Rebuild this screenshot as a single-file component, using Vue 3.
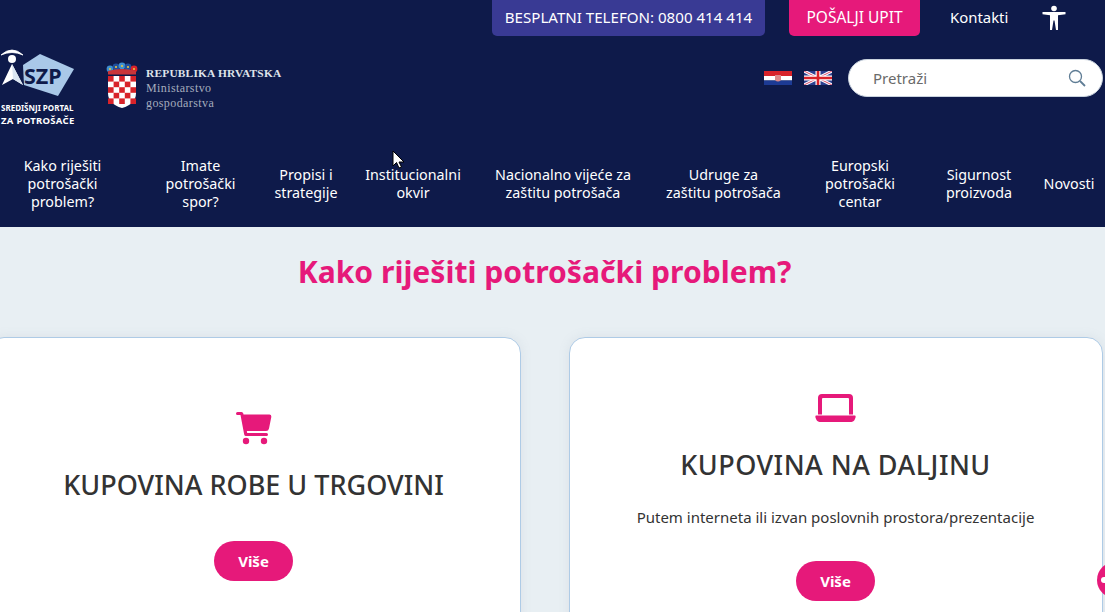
<script setup>
const nav = [
  { w: 125, lines: ['Kako riješiti', 'potrošački', 'problem?'] },
  { w: 151, lines: ['Imate', 'potrošački', 'spor?'] },
  { w: 64, pad: 4, lines: ['Propisi i', 'strategije'] },
  { w: 146, lines: ['Institucionalni', 'okvir'] },
  { w: 154, lines: ['Nacionalno vijeće za', 'zaštitu potrošača'] },
  { w: 167, lines: ['Udruge za', 'zaštitu potrošača'] },
  { w: 106, lines: ['Europski', 'potrošački', 'centar'] },
  { w: 132, lines: ['Sigurnost', 'proizvoda'] },
  { w: 48, lines: ['Novosti'] }
]
const squares = []
for (let r = 0; r < 5; r++) for (let c = 0; c < 5; c++) if ((r + c) % 2 === 0) squares.push({ x: 108 + c * 5.6, y: 76 + r * 5.6 })
const lobes = [
  { cx: 110, cy: 69, c: '#3d8fd0' },
  { cx: 116, cy: 67, c: '#1f4f9c' },
  { cx: 122, cy: 66, c: '#3d8fd0' },
  { cx: 128, cy: 67, c: '#1f4f9c' },
  { cx: 134, cy: 69, c: '#d8232a' }
]
</script>

<template>
  <div class="page">
    <header class="head">
      <div class="top">
        <a class="btn phone">BESPLATNI TELEFON: 0800 414 414</a>
        <a class="btn send">POŠALJI UPIT</a>
        <a class="contact">Kontakti</a>
        <svg class="a11y" width="24" height="26" viewBox="0 0 24 26" fill="#fff">
          <circle cx="12" cy="3.500" r="2.800" />
          <path d="M.5 7H23.500V9.200L16 10.200V25H14L12.500 15.500H11.500L10 25H8V10.200L.5 9.200Z" />
        </svg>
      </div>
      <div class="mid">
        <div class="logos">
          <div class="szp">
            <svg width="76" height="53" viewBox="0 0 76 53">
              <path d="M23 17 40 6l34 15-16 27-34-11z" fill="#a9c8e8" />
              <path d="M1 7Q12-3 23 7Q12 2 1 7Z" fill="#fff" stroke="#fff" stroke-width=".8" />
              <circle cx="12" cy="11" r="4" fill="#fff" />
              <path d="M12 16 2 37l11-6 10 6z" fill="#fff" />
              <path d="M12 16 13 31 23 37z" fill="#dbe6f2" />
              <text x="24" y="36" class="szp-t">SZP</text>
            </svg>
            <div class="szp-l">SREDIŠNJI PORTAL</div>
            <div class="szp-l wide">ZA POTROŠAČE</div>
          </div>
          <div class="gov">
            <svg width="34" height="46" viewBox="105 62 34 46">
              <circle v-for="l in lobes" :key="l.cx" :cx="l.cx" :cy="l.cy" r="3.400" :fill="l.c" />
              <circle v-for="l in lobes" :key="'d' + l.cx" :cx="l.cx" :cy="l.cy" r="1.100" fill="#e8c63f" />
              <path d="M108 71q14-4 28 0v3.500h-28z" fill="#c9353a" />
              <path d="M108 76h28v17q0 11-14 15-14-4-14-15z" fill="#fff" />
              <g fill="#d8232a">
                <rect v-for="(s, i) in squares" :key="i" :x="s.x" :y="s.y" width="5.600" height="5.600" />
              </g>
            </svg>
            <div class="gov-t">
              <div class="gov-a">REPUBLIKA HRVATSKA</div>
              <div class="gov-b">Ministarstvo</div>
              <div class="gov-b">gospodarstva</div>
            </div>
          </div>
        </div>
        <div class="tools">
          <svg width="28" height="14" viewBox="0 0 28 14">
            <rect width="28" height="5" fill="#d8232a" />
            <rect y="5" width="28" height="4.500" fill="#fff" />
            <rect y="9.500" width="28" height="4.500" fill="#1c3a94" />
            <path d="M11 4h6v5q-3 3-6 0z" fill="#d88" />
          </svg>
          <svg width="28" height="14" viewBox="0 0 28 14">
            <rect width="28" height="14" fill="#2a3f8f" />
            <path d="M0 0 28 14M28 0 0 14" stroke="#fff" stroke-width="3" />
            <path d="M0 0 28 14M28 0 0 14" stroke="#d8486a" stroke-width="1" />
            <path d="M14 0v14M0 7h28" stroke="#fff" stroke-width="5" />
            <path d="M14 0v14M0 7h28" stroke="#d8232a" stroke-width="2.600" />
          </svg>
          <div class="search">
            <span>Pretraži</span>
            <svg width="18" height="18" viewBox="0 0 18 18" fill="none" stroke="#5f7d95" stroke-width="1.300">
              <circle cx="7.500" cy="7.500" r="6" />
              <path d="M12 12l5 5" stroke-width="1.800" />
            </svg>
          </div>
        </div>
      </div>
      <nav class="nav">
        <a v-for="(n, i) in nav" :key="i" class="item" :style="{ width: n.w + 'px', paddingRight: (n.pad || 0) + 'px' }">
          <span v-for="l in n.lines" :key="l">{{ l }}</span>
        </a>
      </nav>
    </header>
    <main class="main">
      <h1>Kako riješiti potrošački problem?</h1>
      <div class="cards">
        <section class="card c1">
          <svg class="ico" width="37" height="33" viewBox="0 0 37 33" fill="#e6197a">
            <path d="M1 1.500Q1 0 2.500 0H6.500Q8 0 8.300 1.500L8.500 2.500H34.500Q36.500 2.500 36.300 5L34 16.500Q33.500 19 31 19H11.800L12.200 21H31.500Q33 21 33 22.500T31.500 24H11Q9.500 24 9.200 22.500L5.500 3H2.500Q1 3 1 1.500Z" />
            <circle cx="11" cy="29" r="3.200" />
            <circle cx="29" cy="29" r="3.200" />
          </svg>
          <h2>KUPOVINA ROBE U TRGOVINI</h2>
          <a class="more">Više</a>
        </section>
        <section class="card c2">
          <svg class="ico" width="41" height="28" viewBox="0 0 41 28" fill="#e6197a">
            <path fill-rule="evenodd" d="M7 0h27q4 0 4 4v16.500h-4V5q0-1-1-1H8q-1 0-1 1v15.500H3V4q0-4 4-4z" />
            <path d="M1 21.500h39q1 0 .5 2-1 4-4 4.500H4.500q-3-.5-4-4.500-.5-2 .5-2z" />
          </svg>
          <h2>KUPOVINA NA DALJINU</h2>
          <p>Putem interneta ili izvan poslovnih prostora/prezentacije</p>
          <a class="more">Više</a>
        </section>
      </div>
    </main>
    <div class="chat"><i></i></div>
    <svg class="cursor" width="13" height="19" viewBox="0 0 13 19">
      <path d="M1 1v15l3.500-3.500L7 18l2.500-1-2.500-5h5z" fill="#fff" stroke="#000" stroke-width="1" />
    </svg>
  </div>
</template>

<style>
html, body { margin: 0; overflow: hidden; }
</style>

<style scoped>
.page {
  position: relative;
  width: 1105px;
  height: 612px;
  overflow: hidden;
  background: #e8eff3;
  font-family: "Noto Sans", sans-serif;
  color: #2b2b2b;
}
.head { background: #0e1a4a; height: 227px; color: #fff; }
.top { display: flex; align-items: flex-start; height: 36px; padding-left: 492px; }
.btn {
  height: 36px;
  line-height: 34px;
  font-size: 15.100px;
  text-align: center;
  border-radius: 0 0 5px 5px;
  color: #fff;
  white-space: nowrap;
}
.phone { width: 273px; background: #393a94; }
.send { width: 131px; margin-left: 24px; background: #e6197a; font-size: 15.500px; }
.contact { margin-left: 30px; font-size: 14.900px; line-height: 34px; width: 57px; white-space: nowrap; }
.a11y { margin-left: 35px; margin-top: 5px; }
.mid { display: flex; justify-content: space-between; height: 109px; }
.logos { display: flex; align-items: flex-start; }
.szp { width: 76px; margin-left: 1px; margin-top: 12px; }
.szp svg { display: block; margin-left: -1px; }
.szp-t { font: 700 21.500px "Noto Sans", sans-serif; fill: #0e1a4a; }
.szp-l { font-size: 8px; font-weight: 700; line-height: 13px; white-space: nowrap; }
.szp-l.wide { font-size: 9.500px; letter-spacing: .3px; }
.gov { display: flex; margin-left: 28px; margin-top: 26px; }
.gov-t { margin-left: 7px; margin-top: 4px; }
.gov-a { font: 700 11.400px "Liberation Serif", serif; line-height: 15px; color: #dfe3ea; white-space: nowrap; letter-spacing: .2px; }
.gov-b { font: 400 12px "Liberation Serif", serif; line-height: 15px; color: #a5acbd; letter-spacing: .4px; }
.tools { display: flex; align-items: center; height: 38px; margin-top: 23px; padding-right: 2px; }
.tools svg:first-child { margin-right: 12px; }
.tools > svg:nth-child(2) { margin-right: 16px; }
.search {
  width: 255px;
  height: 38px;
  box-sizing: border-box;
  background: #fff;
  border-radius: 19px;
  border: 1px solid #c9d3de;
  padding: 0 16px 0 24px;
  display: flex;
  align-items: center;
  justify-content: space-between;
  color: #6a6a6a;
  font-size: 15px;
}
.nav { display: flex; height: 77px; }
.item {
  flex: none;
  box-sizing: border-box;
  display: flex;
  flex-direction: column;
  align-items: center;
  justify-content: center;
  font-size: 14.300px;
  line-height: 18px;
  white-space: nowrap;
}
.main { padding-top: 24px; }
h1 {
  margin: 0;
  font-size: 30.100px;
  line-height: 42px;
  font-weight: 700;
  color: #e6197a;
  text-align: center;
  padding-right: 16px;
}
.cards { display: flex; gap: 48px; margin: 44px 0 0 -12px; }
.card {
  flex: none;
  height: 340px;
  box-sizing: border-box;
  background: #fff;
  border: 1px solid #aecbe6;
  border-radius: 16px;
  display: flex;
  flex-direction: column;
  align-items: center;
  box-shadow: 0 0 12px rgba(120, 140, 160, .12);
}
.c1 { width: 533px; padding: 74px 2px 0 0; }
.c2 { width: 534px; padding: 56px 1px 0 0; }
.ico { display: block; }
h2 {
  margin: 0;
  font-size: 27px;
  font-weight: 500;
  line-height: 36px;
  color: #333;
  white-space: nowrap;
}
.c1 h2 { margin-top: 22px; }
.c2 h2 { margin-top: 25px; letter-spacing: .48px; }
p { margin: 24px 0 0; font-size: 15px; line-height: 20px; color: #333; }
.more {
  width: 79px;
  height: 40px;
  line-height: 40px;
  text-align: center;
  background: #e6197a;
  color: #fff;
  border-radius: 20px;
  font-size: 15px;
  font-weight: 700;
}
.c1 .more { margin-top: 38px; }
.c2 .more { margin-top: 34px; }
.chat {
  position: absolute;
  left: 1097px;
  top: 562px;
  width: 36px;
  height: 36px;
  border-radius: 50%;
  background: #e6197a;
}
.chat i {
  position: absolute;
  left: 4px;
  top: 15px;
  width: 6px;
  height: 6px;
  border-radius: 50%;
  background: #fff;
}
.cursor { position: absolute; left: 392px; top: 150px; }
</style>
